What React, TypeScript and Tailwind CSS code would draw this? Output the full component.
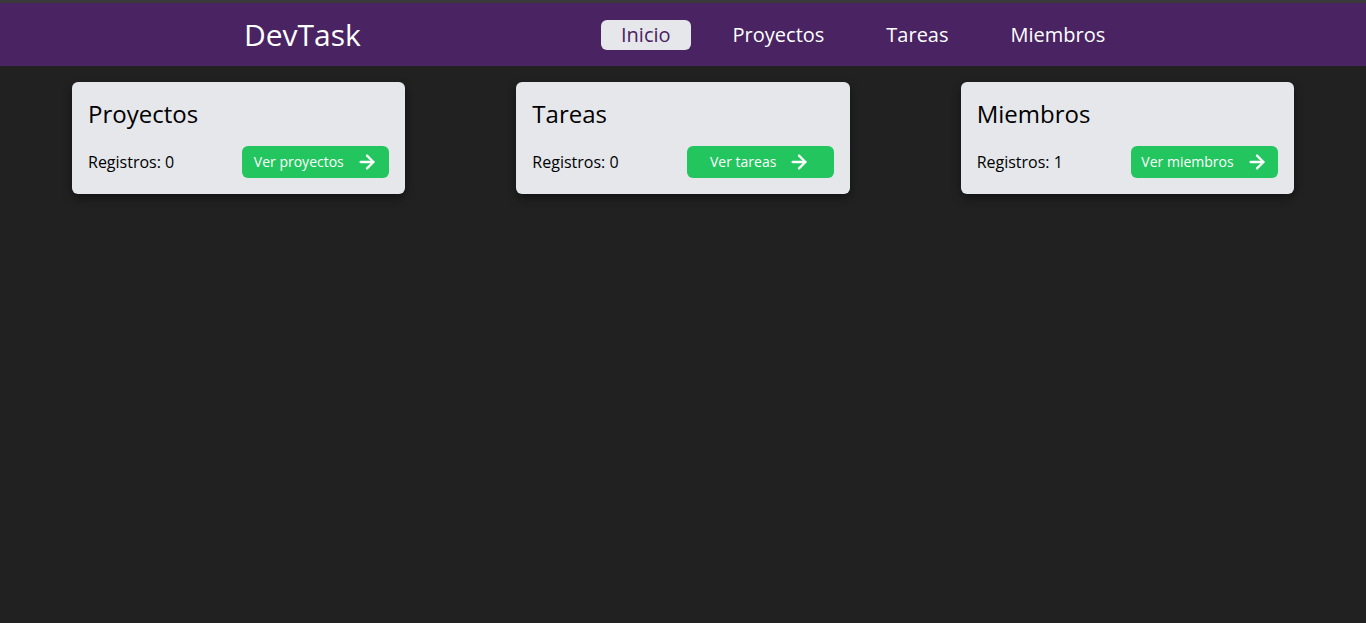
import { ArrowRight } from "lucide-react";

const font = { fontFamily: '"Open Sans", "Liberation Sans", sans-serif' };

const links = ["Inicio", "Proyectos", "Tareas", "Miembros"];

const cards = [
  { title: "Proyectos", count: 0, label: "Ver proyectos" },
  { title: "Tareas", count: 0, label: "Ver tareas" },
  { title: "Miembros", count: 1, label: "Ver miembros" },
];

const App = () => {
  return (
    <div className="min-h-screen bg-[#212121]" style={font}>
      <header className="h-[66px] border-t-[3px] border-[#3a3a3a] bg-[#4a2362] flex items-center pl-[244px]">
        <h1 className="text-3xl text-white w-[357px]">DevTask</h1>
        <nav className="flex items-center gap-[22px]">
          {links.map((l, i) => (
            <a
              key={l}
              className={
                i === 0
                  ? "px-5 py-px rounded-md bg-gray-200 text-xl text-[#4a2362]"
                  : "px-5 py-px rounded-md text-xl text-white"
              }>
              {l}
            </a>
          ))}
        </nav>
      </header>

      <main className="grid grid-cols-3 gap-[111px] px-[72px] pt-4">
        {cards.map((c) => (
          <div
            key={c.title}
            className="bg-gray-200 rounded-md p-4 shadow-[0_4px_10px_rgba(0,0,0,0.45)]">
            <h2 className="text-2xl text-black">{c.title}</h2>
            <div className="mt-4 flex items-center justify-between">
              <p className="text-base text-black">Registros: {c.count}</p>
              <button className="h-8 w-[147px] flex items-center justify-center gap-3 rounded-md bg-[#22c55e] text-sm text-white">
                {c.label}
                <ArrowRight size={22} strokeWidth={2.5} />
              </button>
            </div>
          </div>
        ))}
      </main>
    </div>
  );
};

export default App;
